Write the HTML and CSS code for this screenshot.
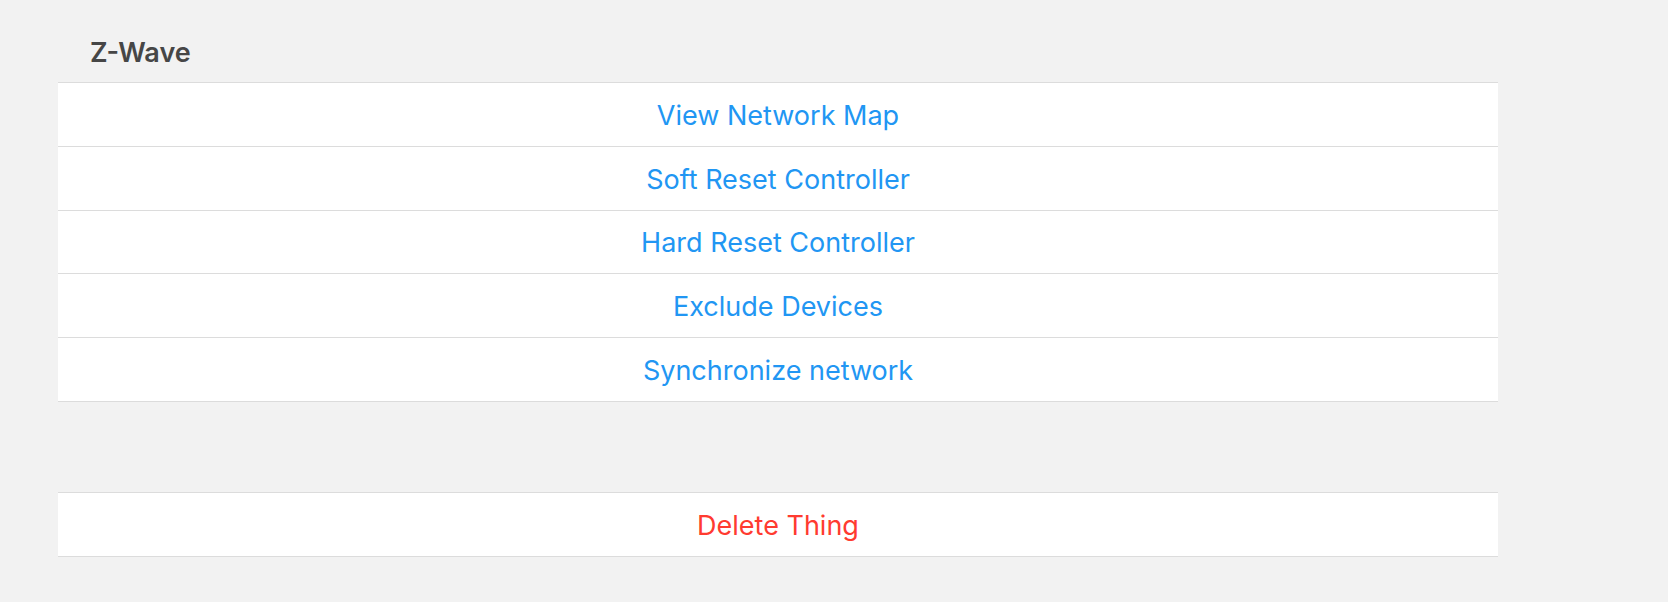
FILE: index.html
```html
<!DOCTYPE html>
<html>
<head>
<meta charset="utf-8">
<link rel="stylesheet" href="styles.css">
</head>
<body>
<div class="page">
  <div class="block-title">Z-Wave</div>
  <ul class="list">
    <li class="item"><span class="link">View Network Map</span></li>
    <li class="item"><span class="link">Soft Reset Controller</span></li>
    <li class="item"><span class="link">Hard Reset Controller</span></li>
    <li class="item"><span class="link">Exclude Devices</span></li>
    <li class="item"><span class="link">Synchronize network</span></li>
  </ul>
  <ul class="list list-delete">
    <li class="item"><span class="link danger">Delete Thing</span></li>
  </ul>
</div>
</body>
</html>
```

FILE: styles.css
```css
html, body {
  margin: 0;
  padding: 0;
  background: #f2f2f2;
}
body {
  font-family: Inter, "Liberation Sans", sans-serif;
  width: 1668px;
  height: 602px;
  overflow: hidden;
}
.page {
  width: 1440px;
  margin-left: 58px;
  padding-top: 37px;
}
.block-title {
  padding-left: 32px;
  font-size: 27px;
  font-weight: 600;
  color: #464646;
  line-height: 32px;
  height: 45px;
}
.list {
  list-style: none;
  margin: 0;
  padding: 0;
  background: #fff;
  border-top: 1px solid #dcdcdc;
}
.item {
  height: 63.8px;
  box-sizing: border-box;
  padding-top: 2px;
  border-bottom: 1px solid #dcdcdc;
  display: flex;
  align-items: center;
  justify-content: center;
}
.link {
  font-size: 27px;
  color: #2196f3;
}
.danger {
  color: #ff3b30;
}
.list-delete {
  margin-top: 90px;
}
```
